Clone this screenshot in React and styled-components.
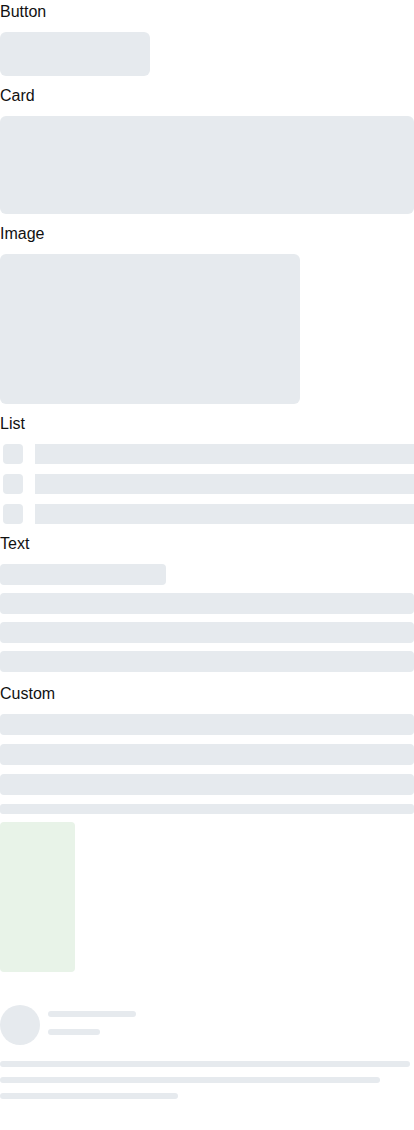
import React from "react";
import styled, { createGlobalStyle } from "styled-components";

const Global = createGlobalStyle`
  html, body { margin: 0; padding: 0; background: #fff; }
  body { font-family: "Liberation Sans", Arial, sans-serif; color: #111; }
`;

const GRAY = "#e6eaee";

const Page = styled.div`
  width: 414px;
  display: flex;
  flex-direction: column;
`;

const Label = styled.div`
  font-size: 16px;
  line-height: 24px;
  height: 24px;
  margin-bottom: 8px;
`;

const Section = styled.section`
  display: flex;
  flex-direction: column;
  margin-bottom: ${(p) => p.$mb || 8}px;
`;

const Block = styled.div`
  background: ${(p) => p.$color || GRAY};
  width: ${(p) => p.$w || "100%"};
  height: ${(p) => p.$h}px;
  border-radius: ${(p) => (p.$r != null ? p.$r : 6)}px;
  margin-top: ${(p) => p.$mt || 0}px;
  flex-shrink: 0;
`;

const ListRow = styled.div`
  display: flex;
  align-items: center;
  gap: 12px;
  padding-left: 3px;
`;

const Square = styled.div`
  width: 20px;
  height: 20px;
  border-radius: 4px;
  background: ${GRAY};
  flex-shrink: 0;
`;

const Bar = styled.div`
  flex: 1;
  height: 20px;
  background: ${GRAY};
`;

const Stack = styled.div`
  display: flex;
  flex-direction: column;
  gap: ${(p) => p.$gap}px;
`;

const Profile = styled.div`
  display: flex;
  flex-direction: column;
  margin-top: 33px;
`;

const Header = styled.div`
  display: flex;
  align-items: center;
  gap: 8px;
`;

const Avatar = styled.div`
  width: 40px;
  height: 40px;
  border-radius: 50%;
  background: ${GRAY};
`;

const HeaderLines = styled.div`
  display: flex;
  flex-direction: column;
  gap: 12px;
  margin-top: -4px;
`;

const Line = styled.div`
  height: 6px;
  border-radius: 3px;
  background: ${GRAY};
  width: ${(p) => p.$w}px;
`;

const BodyLines = styled.div`
  display: flex;
  flex-direction: column;
  gap: 10px;
  margin-top: 16px;
`;

export default function App() {
  return (
    <Page>
      <Global />
      <Section>
        <Label>Button</Label>
        <Block $w="150px" $h={44} />
      </Section>
      <Section>
        <Label>Card</Label>
        <Block $h={98} />
      </Section>
      <Section>
        <Label>Image</Label>
        <Block $w="300px" $h={150} />
      </Section>
      <Section>
        <Label>List</Label>
        <Stack $gap={10}>
          {[0, 1, 2].map((i) => (
            <ListRow key={i}>
              <Square />
              <Bar />
            </ListRow>
          ))}
        </Stack>
      </Section>
      <Section $mb={10}>
        <Label>Text</Label>
        <Stack $gap={8}>
          <Block $w="40%" $h={21} $r={4} />
          <Block $h={21} $r={4} />
          <Block $h={21} $r={4} />
          <Block $h={21} $r={4} />
        </Stack>
      </Section>
      <Section>
        <Label>Custom</Label>
        <Stack $gap={9}>
          <Block $h={21} $r={4} />
          <Block $h={21} $r={4} />
          <Block $h={21} $r={4} />
          <Block $h={10} $r={3} />
        </Stack>
        <Block $w="75px" $h={150} $r={4} $color="#e8f3e8" $mt={8} />
        <Profile>
          <Header>
            <Avatar />
            <HeaderLines>
              <Line $w={88} />
              <Line $w={52} />
            </HeaderLines>
          </Header>
          <BodyLines>
            <Line $w={410} />
            <Line $w={380} />
            <Line $w={178} />
          </BodyLines>
        </Profile>
      </Section>
    </Page>
  );
}
